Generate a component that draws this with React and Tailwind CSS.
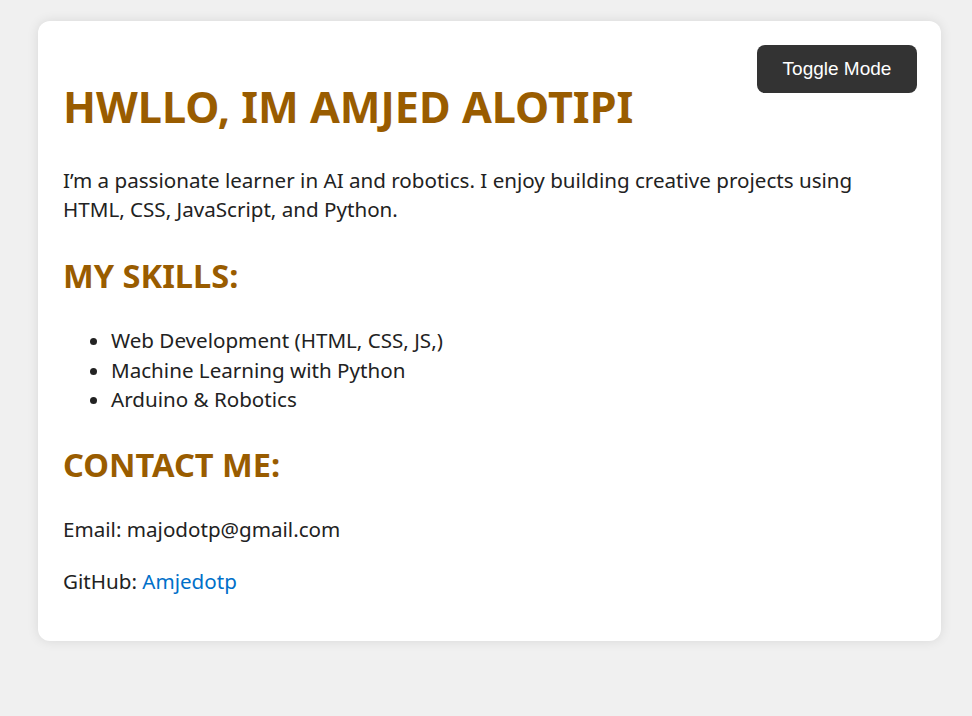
export default function App() {
  return (
    <div className="min-h-screen bg-[#f0f0f0] pt-[21px] pl-[38px] font-['Noto_Sans',sans-serif] text-[#222]">
      <div className="relative w-[903px] rounded-xl bg-white px-[25px] pt-[56px] pb-[45px] shadow-[0_0_12px_rgba(0,0,0,0.1)]">
        <button className="absolute right-[24px] top-[24px] h-[48px] w-[160px] rounded-lg bg-[#333] font-['Liberation_Sans',Arial,sans-serif] text-[19px] text-white">
          Toggle Mode
        </button>
        <h1 className="text-[43.2px] font-bold leading-[60px] text-[#995c00]">HWLLO, IM AMJED ALOTIPI</h1>
        <p className="mt-[29px] pr-[40px] text-[20.6px] leading-[29px]">
          I’m a passionate learner in AI and robotics. I enjoy building creative projects using HTML, CSS, JavaScript, and Python.
        </p>
        <h2 className="mt-[27px] text-[32.6px] font-bold leading-[50px] text-[#995c00]">MY SKILLS:</h2>
        <ul className="mt-[25px] list-disc pl-[48px] text-[20.6px] leading-[29.5px]">
          <li>Web Development (HTML, CSS, JS,)</li>
          <li>Machine Learning with Python</li>
          <li>Arduino &amp; Robotics</li>
        </ul>
        <h2 className="mt-[25px] text-[32.6px] font-bold leading-[50px] text-[#995c00]">CONTACT ME:</h2>
        <p className="mt-[25px] text-[20.6px] leading-[29px]">Email: majodotp@gmail.com</p>
        <p className="mt-[23px] text-[20.6px] leading-[29px]">
          GitHub: <a className="text-[#0070c9]">Amjedotp</a>
        </p>
      </div>
    </div>
  );
}
